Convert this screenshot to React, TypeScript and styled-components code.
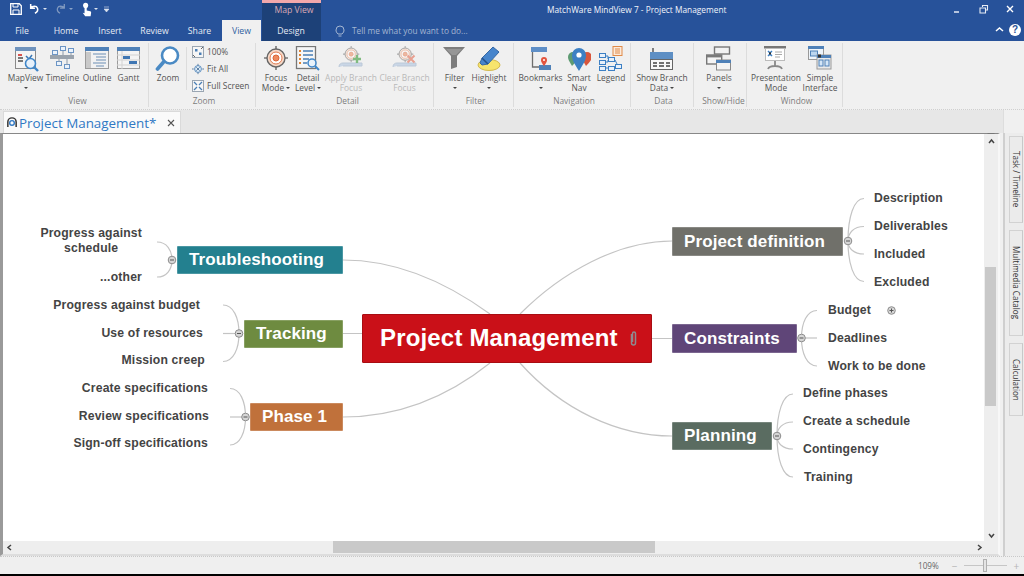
import React from "react";
import styled, { createGlobalStyle } from "styled-components";

const Global = createGlobalStyle`
  html, body { margin: 0; padding: 0; width: 1024px; height: 576px; overflow: hidden; background: #000; }
  #root { width: 1024px; height: 576px; }
  * { box-sizing: border-box; }
`;

const Shell = styled.div`
  width: 1024px; height: 574px; display: flex; flex-direction: column;
  font-family: "Open Sans", "Liberation Sans", sans-serif; background: #f0f0f0; overflow: hidden;
`;
const Header = styled.header`
  height: 41px; background: #27529a; position: relative; color: #fff; display: flex; flex-direction: column; flex: none;
`;
const TitleRow = styled.div`
  height: 20px; display: flex; align-items: center; position: relative; flex: none;
`;
const Qat = styled.div`
  display: flex; align-items: center; padding: 0 0 2px 10px;
`;
const QatSlot = styled.span<{ $w: number }>`
  width: ${p => p.$w}px; display: flex; align-items: center; justify-content: flex-start; height: 18px;
`;
const Caret = styled.i<{ $c?: string; $s?: number }>`
  display: inline-block; width: 0; height: 0;
  border-left: ${p => p.$s ?? 2.5}px solid transparent; border-right: ${p => p.$s ?? 2.5}px solid transparent;
  border-top: ${p => p.$s ?? 2.5}px solid ${p => p.$c ?? "#444"};
`;
const AppTitle = styled.div`
  position: absolute; left: 547px; top: 4px; font-size: 8.33px; line-height: 12px; white-space: nowrap; color: #f2f5fa;
`;
const WinControls = styled.div`
  position: absolute; right: 7px; top: 3px; display: flex; align-items: center; gap: 14px;
`;
const TabRow = styled.nav`
  height: 21px; display: flex; align-items: stretch; position: relative; flex: none;
`;
const MenuTab = styled.div<{ $w: number; $active?: boolean }>`
  width: ${p => p.$w}px; font-size: 8.7px; display: flex; align-items: center; justify-content: center; flex: none;
  background: ${p => (p.$active ? "#f0f0f0" : "transparent")};
  color: ${p => (p.$active ? "#2f5f9f" : "#e6ebf4")};
  position: relative;
`;
const ContextBand = styled.div`
  position: absolute; left: 262px; top: 0; width: 59px; height: 41px; background: #1d4178;
  border-top: 3px solid #f2a8ab; text-align: center; padding-left: 5px;
  color: #d8a9b4; font-size: 8.7px; line-height: 15px;
`;
const TellMe = styled.div`
  display: flex; align-items: center; gap: 7px; margin-left: 14px; color: #a4b6d2; font-size: 8.3px;
`;
const RibbonEnd = styled.div`
  position: absolute; right: 3px; top: 0; height: 19px; display: flex; align-items: center; gap: 5px;
`;
const HelpDot = styled.span`
  width: 12px; height: 12px; border-radius: 50%; background: #fff; color: #27529a; font-size: 10px; font-weight: 700;
  display: flex; align-items: center; justify-content: center; font-family: "Liberation Sans", sans-serif;
`;

const Ribbon = styled.section`
  height: 69px; background: #f0f0f0; display: flex; padding-top: 2px; border-bottom: 1px dotted #cfcfcf; flex: none;
`;
const Group = styled.div<{ $w: number; $pad: number }>`
  width: ${p => p.$w}px; height: 64px; border-right: 1px solid #dcdcdc; padding-left: ${p => p.$pad}px;
  display: flex; flex-direction: column; flex: none;
`;
const GroupBody = styled.div`
  height: 52px; display: flex; align-items: flex-start;
`;
const GroupLabel = styled.div`
  height: 12px; font-size: 8.4px; line-height: 11px; text-align: center; color: #7d7d7d;
`;
const RButton = styled.div<{ $w: number; $off?: boolean }>`
  width: ${p => p.$w}px; display: flex; flex-direction: column; align-items: center; flex: none;
  font-size: 8.4px; line-height: 10px; color: ${p => (p.$off ? "#b9b9b9" : "#555")}; text-align: center; white-space: nowrap;
`;
const IconBox = styled.div`
  height: 30px; padding-top: 3px; display: flex; align-items: flex-start; justify-content: center;
`;
const ArrowLine = styled.div`
  height: 10px; display: flex; align-items: center; justify-content: center; gap: 2px;
`;
const VSep = styled.div`
  width: 1px; height: 43px; background: #dcdcdc; margin: 4px 5px 0 3px; flex: none;
`;
const SmallCol = styled.div`
  display: flex; flex-direction: column; gap: 4px; padding-top: 2px;
`;
const SmallBtn = styled.div`
  display: flex; align-items: center; gap: 3px; height: 13px; font-size: 8.4px; color: #555; white-space: nowrap;
`;

const TabStrip = styled.div`
  height: 23px; background: #e7e7e7; display: flex; align-items: flex-end; padding-left: 3px; position: relative; flex: none;
`;
const DocTab = styled.div`
  width: 178px; height: 22px; background: #fafafa; border: 1px solid #dadada; border-bottom: 0; display: flex; align-items: center;
  padding-left: 2px; gap: 1px; font-size: 13.4px; color: #2f78c4; white-space: nowrap;
  & > svg { flex: none; }
`;
const DocClose = styled.span`
  margin-left: 10px; display: flex; align-items: center;
`;
const StripMenu = styled.div`
  position: absolute; left: 987px; top: 10px;
`;
const StripSide = styled.div`
  position: absolute; left: 1003px; top: 0; width: 21px; height: 23px; background: #f0f0f0; border-left: 1px solid #ddd;
`;

const Main = styled.main`
  flex: 1; display: flex; min-height: 0;
`;
const DocPane = styled.div`
  width: 1000px; border-left: 3px solid #9a9a9a; border-top: 1px solid #888; border-right: 2px solid #f7f7f7; border-bottom: 2px solid #ddd;
  display: grid; grid-template-columns: 1fr 14px; grid-template-rows: 1fr 13px; background: #eee;
`;
const Canvas = styled.div`
  background: #fff; position: relative; overflow: hidden;
`;
const VBar = styled.div`
  background: #eee; position: relative; display: flex; flex-direction: column; align-items: center; justify-content: space-between; padding: 4px 0 2px;
`;
const HBar = styled.div`
  background: #eee; position: relative; display: flex; align-items: center; justify-content: space-between; padding: 0 1px 0 3px; height: 13px;
`;
const Corner = styled.div`background: #eee;`;
const VThumb = styled.div`
  position: absolute; left: 1px; top: 133px; width: 11px; height: 139px; background: #c9c9c9;
`;
const HThumb = styled.div`
  position: absolute; left: 330px; top: 0; width: 322px; height: 12px; background: #c9c9c9;
`;
const SideRail = styled.aside`
  flex: 1; background: #ececec; border-left: 2px solid #cfcfcf; padding: 3px 1px 0 4px; margin-left: 3px; display: flex; flex-direction: column; gap: 7px;
`;
const SideTab = styled.div<{ $h: number }>`
  height: ${p => p.$h}px; background: #ebebeb; border: 1px solid #d2d2d2; border-right: 1px solid #c8c8c8;
  writing-mode: vertical-rl; display: flex; align-items: center; justify-content: center; font-size: 8.1px; color: #333; white-space: nowrap;
`;
const Status = styled.footer`
  height: 18px; flex: none; background: #efefef; display: flex; align-items: center; border-top: 1px dotted #c8c8c8; position: relative;
  padding-left: 918px; font-size: 8.2px; color: #666;
`;
const Zoomer = styled.div`
  display: flex; align-items: center; margin-left: 13px; color: #b5b5b5; font-size: 10px;
`;
const Track = styled.div`
  width: 43px; height: 1px; background: #c6c6c6; margin: 0 7px 0 6px; position: relative;
`;
const Knob = styled.div`
  position: absolute; left: 19px; top: -6px; width: 4px; height: 13px; background: #e4e4e4; border: 1px solid #b0b0b0;
`;

const ORIGIN = { x: 3, y: 134 };
const Links = styled.svg`
  position: absolute; left: 0; top: 0; width: 100%; height: 100%;
`;
const Topic = styled.div<{ $x: number; $y: number; $w: number; $h: number; $bg: string }>`
  position: absolute; left: ${p => p.$x - ORIGIN.x}px; top: ${p => p.$y - ORIGIN.y}px; width: ${p => p.$w}px; height: ${p => p.$h}px;
  background: ${p => p.$bg}; color: #fff; font: 700 17px/1 "Liberation Sans", Arial, sans-serif;
  letter-spacing: 0.12px;
  display: flex; align-items: center; border: 1px solid rgba(255,255,255,.18); border-radius: 1px; white-space: nowrap;
  padding: 0 0 1px 11px;
`;
const Root = styled(Topic)`
  border: 1px solid #a80d12; padding: 0 0 1px 17px; font-size: 24px; letter-spacing: 0.17px;
`;
const Leaf = styled.div<{ $x: number; $y: number; $right?: boolean }>`
  position: absolute; top: ${p => p.$y - ORIGIN.y - 8}px;
  ${p => (p.$right ? `right: ${981 - (p.$x - ORIGIN.x)}px; text-align: right;` : `left: ${p.$x - ORIGIN.x}px;`)}
  font: 700 12.2px/16px "Liberation Sans", Arial, sans-serif; letter-spacing: 0.17px; color: #444; white-space: nowrap;
`;
const Wrapped = styled(Leaf)`
  text-align: center; line-height: 15px;
`;
const Clip = styled.svg`
  position: absolute; left: ${630 - ORIGIN.x}px; top: ${331 - ORIGIN.y}px;
`;

type IcoProps = { children: React.ReactNode; w?: number; h?: number; vb?: string };
const Ico = ({ children, w = 26, h = 26, vb }: IcoProps) => (
  <svg width={w} height={h} viewBox={vb ?? `0 0 ${w} ${h}`} fill="none">{children}</svg>
);

const MapViewIcon = () => (
  <Ico>
    <rect x="2.5" y="1.5" width="20" height="21" fill="#f4f4f4" stroke="#8a8a8a" />
    <rect x="2" y="1" width="21" height="4" fill="#6f93bd" />
    <rect x="5" y="8" width="4" height="2" fill="#d9534f" />
    <path d="M5 12h5M5 15h5" stroke="#777" strokeWidth="2" />
    <path d="M13 10l3 3 3-4" stroke="#3c78b5" strokeWidth="1.5" />
    <circle cx="17.5" cy="17.5" r="5" fill="#e6f0fa" stroke="#3f86c9" strokeWidth="1.6" />
    <path d="M21 21l4 4" stroke="#3f86c9" strokeWidth="2.4" />
  </Ico>
);
const TimelineIcon = () => (
  <Ico>
    <rect x="0" y="9" width="24" height="4" fill="#9aa3ad" />
    <rect x="2.5" y="4.5" width="5" height="4" stroke="#6c95c5" fill="#eaf2fb" />
    <rect x="10.5" y=".5" width="5" height="4" stroke="#6c95c5" fill="#eaf2fb" />
    <rect x="18.5" y="2.5" width="5" height="4" stroke="#6c95c5" fill="#eaf2fb" />
    <rect x="6.5" y="15.5" width="5" height="4" stroke="#6c95c5" fill="#eaf2fb" />
    <rect x="14.5" y="18.5" width="5" height="4" stroke="#6c95c5" fill="#eaf2fb" />
    <path d="M13 5v4M21 7v2M9 13v3M17 13v6" stroke="#8c9aaa" />
  </Ico>
);
const OutlineIcon = () => (
  <Ico>
    <rect x="1.5" y="1.5" width="23" height="21" fill="#f2f2f2" stroke="#9b9b9b" />
    <rect x="1" y="1" width="24" height="4" fill="#4f81b8" />
    <rect x="2" y="6" width="5" height="16" fill="#c9c9c9" />
    <path d="M9 8h13M12 11h10M12 14h10M9 17h13M12 20h8" stroke="#6d8fb5" />
  </Ico>
);
const GanttIcon = () => (
  <Ico>
    <rect x="1.5" y="1.5" width="22" height="21" fill="#f4f4f4" stroke="#9b9b9b" />
    <rect x="1" y="1" width="23" height="4" fill="#4f81b8" />
    <path d="M6 5v18M1 9h23M1 14h23M1 19h23" stroke="#d2d2d2" />
    <rect x="7" y="10" width="7" height="3" fill="#3f76b3" />
    <rect x="13" y="15" width="8" height="3" fill="#3f76b3" />
  </Ico>
);
const ZoomIcon = () => (
  <Ico>
    <circle cx="15" cy="9.5" r="8" fill="#fff" stroke="#4a8ac4" strokeWidth="2.6" />
    <path d="M9 15.5L2.5 23" stroke="#4a8ac4" strokeWidth="3.6" strokeLinecap="round" />
  </Ico>
);
const Small100 = () => (
  <Ico w={12} h={12}>
    <rect x=".5" y=".5" width="11" height="11" fill="#f5f5f5" stroke="#9aa6b2" />
    <rect x="3" y="3" width="2.5" height="2.5" fill="#4a7fb5" /><rect x="7" y="6.5" width="2.5" height="2.5" fill="#4a7fb5" />
    <path d="M1 9l2 2M11 1L9 3" stroke="#666" />
  </Ico>
);
const SmallFit = () => (
  <Ico w={12} h={12} vb="0 0 14 12">
    <circle cx="7" cy="6" r="4" fill="#dcebf8" stroke="#4a7fb5" />
    <path d="M7 0v2M7 10v2M0 6h2M12 6h2M5 4l4 4M9 4L5 8" stroke="#4a6f96" />
  </Ico>
);
const SmallFull = () => (
  <Ico w={12} h={12}>
    <rect x=".5" y=".5" width="11" height="11" fill="#f7f7f7" stroke="#9aa6b2" />
    <path d="M2 2l3 3M10 2L7 5M2 10l3-3M10 10L7 7" stroke="#4a7fb5" strokeWidth="1.3" />
  </Ico>
);
const Target = ({ dim }: { dim?: boolean }) => (
  <g opacity={dim ? 0.55 : 1}>
    <path d="M12 0v24M0 12h24" stroke="#777" strokeWidth="1.6" />
    <circle cx="12" cy="12" r="9" fill="#f6d9c8" stroke="#666" strokeWidth="1.4" />
    <circle cx="12" cy="12" r="6" fill="#fff" stroke="#e07a50" />
    <circle cx="12" cy="12" r="3" fill="#ee8a5e" stroke="#d9663a" />
  </g>
);
const FocusIcon = () => <Ico w={24} h={26}><Target /></Ico>;
const DetailIcon = () => (
  <Ico>
    <rect x="1.5" y=".5" width="19" height="22" fill="#f6f6f6" stroke="#777" strokeWidth="1.3" />
    <path d="M4 5h2M4 9h2M4 13h2M4 17h2" stroke="#e08332" strokeWidth="2" />
    <path d="M8 5h10M8 9h10M8 13h6M8 17h4" stroke="#4a7fb5" strokeWidth="1.3" />
    <circle cx="17" cy="17" r="4" fill="#e8f2fb" stroke="#3f86c9" strokeWidth="1.5" />
    <path d="M20 20l4 4" stroke="#3f86c9" strokeWidth="2" />
  </Ico>
);
const BranchFocus = ({ children }: { children: React.ReactNode }) => (
  <Ico w={26} h={24}>
    <g transform="translate(5,0) scale(.68)"><Target dim /></g>
    <path d="M1 21c0-3 2-4 4-4h19v3H5" fill="#c9d6e6" stroke="#bcc9d8" />
    {children}
  </Ico>
);
const ApplyIcon = () => (
  <BranchFocus><path d="M19 9v8M15 13h8" stroke="#80bb80" strokeWidth="2.4" /></BranchFocus>
);
const ClearIcon = () => (
  <BranchFocus><path d="M15.5 9.5l7 7M22.5 9.5l-7 7" stroke="#e8a090" strokeWidth="2" /></BranchFocus>
);
const FilterIcon = () => (
  <Ico w={24} h={24}>
    <path d="M0 1h22l-8 9v11l-6 2V10z" fill="#7d7d7d" />
    <path d="M3 3h16l-6 6H9z" fill="#969696" />
  </Ico>
);
const HighlightIcon = () => (
  <Ico w={24} h={26}>
    <ellipse cx="12" cy="19" rx="11" ry="5.5" fill="#f7e46d" stroke="#d3b950" />
    <path d="M16 1l6 5-11 12-6 1-2-2 2-5z" fill="#4785cc" stroke="#3668a5" />
    <path d="M5 12l6 6" stroke="#24518a" strokeWidth="1.5" />
  </Ico>
);
const BookmarkIcon = () => (
  <Ico w={22} h={26}>
    <rect x="1" y="1" width="16" height="5" fill="#5f8fc7" />
    <path d="M2.5 6v15h15" stroke="#6d6d6d" strokeWidth="1.3" />
    <rect x="9" y="19" width="12" height="5" fill="#4f81b8" />
    <path d="M14 20c-3-4-3-5-3-6a3 3 0 016 0c0 1 0 2-3 6z" fill="#e2543e" />
    <circle cx="14" cy="14" r="1" fill="#fff" />
  </Ico>
);
const SmartIcon = () => (
  <Ico w={24} h={26}>
    <path d="M5 20C2 15 1 13 1 11a5 5 0 0110 0c0 2-2 5-6 9z" fill="#5e9b73" />
    <path d="M19 20c-3-5-4-7-4-9a5 5 0 0110 0c0 2-2 5-6 9z" fill="#d9573d" />
    <path d="M12 25C7 17 5 14 5 9a7 7 0 0114 0c0 5-2 8-7 16z" fill="#3d80c4" />
    <circle cx="12" cy="9" r="2.6" fill="#fff" />
  </Ico>
);
const LegendIcon = () => (
  <Ico w={24} h={26}>
    <rect x="14" y=".5" width="9" height="9" fill="#fbeadb" stroke="#e08a48" />
    <path d="M16 3h5M16 5h5M16 7h5" stroke="#e08a48" />
    <g fill="#e9f1fa" stroke="#3d80c4">
      <rect x=".5" y="7.5" width="6" height="4" /><rect x="9.5" y="11.5" width="6" height="4" />
      <rect x=".5" y="14.5" width="6" height="4" /><rect x=".5" y="20.5" width="6" height="4" />
      <rect x="16.5" y="18.5" width="6" height="4" /><rect x="9.5" y="20.5" width="6" height="4" />
    </g>
    <path d="M7 10h2v3M7 16h2v-2M7 22h2M16 14l2 4" stroke="#3d80c4" />
  </Ico>
);
const BranchDataIcon = () => (
  <Ico w={24} h={26}>
    <rect x="0" y="6" width="23" height="8" fill="#5e8fc4" />
    <path d="M3 2v4" stroke="#5a5a5a" strokeWidth="1.5" />
    <rect x=".5" y="13.5" width="22" height="10" fill="#f8f8f8" stroke="#666" />
    <path d="M3 17h4M9 17h5M16 17h4M3 20h4M9 20h5M16 20h4" stroke="#444" strokeWidth="1.4" />
  </Ico>
);
const PanelsIcon = () => (
  <Ico>
    <rect x="8.5" y="1" width="15" height="7" fill="#f2f2f2" stroke="#777" strokeWidth="1.4" />
    <rect x=".7" y="9" width="15" height="9" fill="#f4f4f4" stroke="#777" strokeWidth="1.4" />
    <rect x="1" y="9" width="15" height="2.4" fill="#7a7a7a" />
    <rect x="10.5" y="14" width="14" height="10" fill="#f4f4f4" stroke="#888" />
    <rect x="10" y="14" width="15" height="3" fill="#4f81b8" />
  </Ico>
);
const PresentIcon = () => (
  <Ico w={24} h={24}>
    <rect x="0" y="0" width="22" height="2.5" fill="#777" />
    <rect x="1.5" y="2.5" width="19" height="12" fill="#fff" stroke="#bbb" />
    <path d="M4 5l2 2 2-2M4 10l2-2 2 2" stroke="#3d80c4" strokeWidth="1.5" />
    <rect x="5" y="6.4" width="2" height="2" fill="#333" />
    <path d="M11 6h7M11 8.5h7M11 11h5" stroke="#aaa" />
    <path d="M11 15v5M4 23c1-2.5 3-3 7-3s6 .5 7 3" stroke="#888" strokeWidth="1.8" />
  </Ico>
);
const SimpleIcon = () => (
  <Ico w={24} h={26}>
    <rect x=".5" y=".5" width="15" height="13" fill="#eef4fa" stroke="#999" />
    <rect x="0" y="0" width="16" height="3" fill="#4f81b8" />
    <rect x="2.5" y="5" width="7" height="5" fill="#bcd6ef" stroke="#4f81b8" />
    <rect x="9" y="9" width="14" height="14" fill="#eaeaea" stroke="#999" />
    <rect x="9" y="9" width="14" height="3" fill="#4f81b8" />
    <rect x="11" y="14" width="4" height="6" fill="#d4e6f7" stroke="#4f81b8" />
    <rect x="17" y="14" width="4" height="6" fill="#d4e6f7" stroke="#4f81b8" />
    <rect x="10" y="8.5" width="3" height="3" fill="#333" />
  </Ico>
);

type Btn = { lines: string[]; w: number; icon: React.ReactNode; arrow?: "below" | "inline"; off?: boolean };
const RibbonButton = ({ lines, w, icon, arrow, off }: Btn) => (
  <RButton $w={w} $off={off}>
    <IconBox>{icon}</IconBox>
    {lines.map((l, i) => (
      <ArrowLine key={l}>
        {l}
        {arrow === "inline" && i === lines.length - 1 && <Caret />}
      </ArrowLine>
    ))}
    {arrow === "below" && <ArrowLine><Caret /></ArrowLine>}
  </RButton>
);

const groups: { label: string; w: number; pad: number; buttons: Btn[] }[] = [
  { label: "Detail", w: 178, pad: 6, buttons: [
    { lines: ["Focus", "Mode"], w: 28, icon: <FocusIcon />, arrow: "inline" },
    { lines: ["Detail", "Level"], w: 36, icon: <DetailIcon />, arrow: "inline" },
    { lines: ["Apply Branch", "Focus"], w: 50, icon: <ApplyIcon />, off: true },
    { lines: ["Clear Branch", "Focus"], w: 57, icon: <ClearIcon />, off: true },
  ] },
  { label: "Filter", w: 80, pad: 4, buttons: [
    { lines: ["Filter"], w: 33, icon: <FilterIcon />, arrow: "below" },
    { lines: ["Highlight"], w: 36, icon: <HighlightIcon />, arrow: "below" },
  ] },
  { label: "Navigation", w: 117, pad: 4, buttons: [
    { lines: ["Bookmarks"], w: 45, icon: <BookmarkIcon />, arrow: "below" },
    { lines: ["Smart", "Nav"], w: 32, icon: <SmartIcon /> },
    { lines: ["Legend"], w: 32, icon: <LegendIcon /> },
  ] },
  { label: "Data", w: 63, pad: 3, buttons: [
    { lines: ["Show Branch", "Data"], w: 56, icon: <BranchDataIcon />, arrow: "inline" },
  ] },
  { label: "Show/Hide", w: 53, pad: 7, buttons: [
    { lines: ["Panels"], w: 36, icon: <PanelsIcon />, arrow: "below" },
  ] },
  { label: "Window", w: 96, pad: 4, buttons: [
    { lines: ["Presentation", "Mode"], w: 50, icon: <PresentIcon /> },
    { lines: ["Simple", "Interface"], w: 38, icon: <SimpleIcon /> },
  ] },
];

const topics = [
  { t: "Troubleshooting", x: 177, y: 246, w: 166, h: 28, bg: "#23808f" },
  { t: "Tracking", x: 244, y: 320, w: 99, h: 28, bg: "#6e8b40" },
  { t: "Phase 1", x: 250, y: 403, w: 93, h: 28, bg: "#c0713b" },
  { t: "Project definition", x: 672, y: 227, w: 171, h: 29, bg: "#70706a" },
  { t: "Constraints", x: 672, y: 324, w: 125, h: 29, bg: "#5f4578" },
  { t: "Planning", x: 672, y: 422, w: 100, h: 28, bg: "#5a6c61" },
];
const rightLeaves: [string, number, number][] = [
  ["Description", 874, 198], ["Deliverables", 874, 226], ["Included", 874, 253.5], ["Excluded", 874, 281.5],
  ["Budget", 828, 310], ["Deadlines", 828, 338], ["Work to be done", 828, 365.5],
  ["Define phases", 803, 393], ["Create a schedule", 803, 421], ["Contingency", 803, 449], ["Training", 804, 476.5],
];
const leftLeaves: [string, number, number][] = [
  ["...other", 142, 277],
  ["Progress against budget", 200, 304.5], ["Use of resources", 203, 332.5], ["Mission creep", 205, 360],
  ["Create specifications", 208, 388], ["Review specifications", 209, 415.5], ["Sign-off specifications", 208, 443],
];
const forks: { cx: number; cy: number; ends: [number, number][] }[] = [
  { cx: 172, cy: 260, ends: [[157, 242], [157, 277]] },
  { cx: 239, cy: 333.5, ends: [[223, 305], [223, 333.5], [223, 361.5]] },
  { cx: 245.5, cy: 417, ends: [[230, 388.5], [230, 417], [230, 445]] },
  { cx: 848, cy: 241, ends: [[864, 198.5], [864, 226.5], [864, 254], [864, 281.5]] },
  { cx: 801.5, cy: 338, ends: [[817, 310.5], [817, 338], [817, 366]] },
  { cx: 777, cy: 436, ends: [[793, 394], [793, 422], [793, 449], [793, 477]] },
];
const forkPath = (cx: number, cy: number, ex: number, ey: number) =>
  Math.abs(ey - cy) < 1 ? `M${cx} ${cy}L${ex} ${ey}` : `M${cx} ${cy}C${cx} ${cy + (ey - cy) * 0.55} ${cx + (ex - cx) * 0.35} ${ey} ${ex} ${ey}`;

const MindMap = () => (
  <>
    <Links viewBox="3 134 981 407" preserveAspectRatio="none">
      <g stroke="#c4c4c4" strokeWidth="1.2" fill="none">
        <path d="M520 314C562 272 618 241 672 241" />
        <path d="M490 314C450 285 400 260 343 260" />
        <path d="M490 363C450 395 400 417 343 417" />
        <path d="M520 363C562 410 618 436 672 436" />
        <path d="M343 333.5H362M652 338.5H672" />
        {forks.map(f => f.ends.map(([x, y]) => <path key={`${x}-${y}`} d={forkPath(f.cx, f.cy, x, y)} />))}
      </g>
      {forks.map(f => (
        <g key={f.cx}>
          <circle cx={f.cx} cy={f.cy} r="3.8" fill="#d6d6d6" stroke="#8d8d8d" />
          <path d={`M${f.cx - 2} ${f.cy}h4`} stroke="#555" />
        </g>
      ))}
      <circle cx="891.5" cy="310.5" r="3.8" fill="#d6d6d6" stroke="#8d8d8d" />
      <path d="M889.5 310.5h4M891.5 308.5v4" stroke="#555" />
    </Links>
    {topics.map(t => (
      <Topic key={t.t} $x={t.x} $y={t.y} $w={t.w} $h={t.h} $bg={t.bg}>{t.t}</Topic>
    ))}
    <Root $x={362} $y={314} $w={290} $h={49} $bg="#ca1018">Project Management</Root>
    <Clip width="7" height="15" viewBox="0 0 7 15" fill="none">
      <path d="M1.5 3v9a2 2 0 004 0V2.5a1.5 1.5 0 00-3 0V11" stroke="#8f8a90" strokeWidth="1.5" />
    </Clip>
    {rightLeaves.map(([t, x, y]) => <Leaf key={t} $x={x} $y={y}>{t}</Leaf>)}
    {leftLeaves.map(([t, x, y]) => <Leaf key={t} $x={x} $y={y} $right>{t}</Leaf>)}
    <Wrapped $x={142} $y={234} $right>Progress against<br />schedule</Wrapped>
  </>
);

const Chevron = ({ d }: { d: string }) => (
  <svg width="7" height="7" viewBox="0 0 7 7" fill="none"><path d={d} stroke="#444" strokeWidth="1.5" /></svg>
);

export default function App() {
  return (
    <>
      <Global />
      <Shell>
        <Header>
          <TitleRow>
            <Qat>
              <QatSlot $w={19}>
                <svg width="12" height="12" viewBox="0 0 12 12" fill="none">
                  <path d="M.7.7h8.6l2 2v8.6H.7z" stroke="#fff" strokeWidth="1.3" />
                  <path d="M3 1v3h5V1M3 11V7h6v4" stroke="#fff" />
                </svg>
              </QatSlot>
              <QatSlot $w={14}>
                <svg width="11" height="12" viewBox="0 0 13 12" fill="none">
                  <path d="M2 0v5h5M2 5c2-3 7-3 8 0 1 3-1 5-3 6" stroke="#fff" strokeWidth="1.8" />
                </svg>
              </QatSlot>
              <QatSlot $w={12}><Caret $c="#dbe3ef" /></QatSlot>
              <QatSlot $w={14}>
                <svg width="11" height="12" viewBox="0 0 13 12" fill="none">
                  <path d="M11 0v5H6M11 5C9 2 4 2 3 5c-1 3 1 5 3 6" stroke="#7f98bf" strokeWidth="1.5" />
                </svg>
              </QatSlot>
              <QatSlot $w={13}><Caret $c="#8ba3c7" /></QatSlot>
              <QatSlot $w={12}>
                <svg width="10" height="15" viewBox="0 0 11 15" fill="#fff">
                  <circle cx="4" cy="3" r="2.8" /><path d="M2.8 5h2.4v3.5l3.8.8c1 .3 1.2 1 1 2L9.5 15H3.5L.8 11l2 .5z" />
                </svg>
              </QatSlot>
              <QatSlot $w={10}><Caret $c="#dbe3ef" /></QatSlot>
              <QatSlot $w={8}>
                <svg width="6" height="6" viewBox="0 0 6 6"><path d="M0 1h5M0 3h5L2.5 6z" stroke="#dbe3ef" fill="#dbe3ef" strokeWidth=".6" /></svg>
              </QatSlot>
            </Qat>
            <AppTitle>MatchWare MindView 7 - Project Management</AppTitle>
            <WinControls>
              <svg width="13" height="13" viewBox="0 0 13 13"><path d="M4 9h5" stroke="#e6ebf4" strokeWidth="1.5" /></svg>
              <svg width="13" height="13" viewBox="0 0 13 13" fill="none"><path d="M5.5 4V2.5h5V7H9M3 5h5.500v5H3z" stroke="#e6ebf4" strokeWidth="1.1" /></svg>
              <svg width="13" height="13" viewBox="0 0 13 13"><path d="M3 3l6 6M9 3L3 9" stroke="#fff" strokeWidth="1.4" /></svg>
            </WinControls>
          </TitleRow>
          <ContextBand>Map View</ContextBand>
          <TabRow>
            <MenuTab $w={44}>File</MenuTab>
            <MenuTab $w={44}>Home</MenuTab>
            <MenuTab $w={44}>Insert</MenuTab>
            <MenuTab $w={45}>Review</MenuTab>
            <MenuTab $w={45}>Share</MenuTab>
            <MenuTab $w={39} $active>View</MenuTab>
            <MenuTab $w={60}>Design</MenuTab>
            <TellMe>
              <svg width="10" height="12" viewBox="0 0 10 12" fill="none"><path d="M3 9C1.5 7.5 1 6.5 1 5a4 4 0 018 0c0 1.5-.5 2.5-2 4zM3.500 11h3" stroke="#a4b6d2" /></svg>
              Tell me what you want to do...
            </TellMe>
            <RibbonEnd>
              <svg width="9" height="7" viewBox="0 0 9 7" fill="none"><path d="M1 5l3.500-3L8 5" stroke="#fff" strokeWidth="1.5" /></svg>
              <HelpDot>?</HelpDot>
            </RibbonEnd>
          </TabRow>
        </Header>

        <Ribbon>
          <Group $w={149} $pad={7}>
            <GroupBody>
              <RibbonButton lines={["MapView"]} w={37} icon={<MapViewIcon />} arrow="below" />
              <RibbonButton lines={["Timeline"]} w={37} icon={<TimelineIcon />} />
              <RibbonButton lines={["Outline"]} w={32} icon={<OutlineIcon />} />
              <RibbonButton lines={["Gantt"]} w={31} icon={<GanttIcon />} />
            </GroupBody>
            <GroupLabel>View</GroupLabel>
          </Group>
          <Group $w={107} $pad={4}>
            <GroupBody>
              <RibbonButton lines={["Zoom"]} w={30} icon={<ZoomIcon />} />
              <VSep />
              <SmallCol>
                <SmallBtn><Small100 />100%</SmallBtn>
                <SmallBtn><SmallFit />Fit All</SmallBtn>
                <SmallBtn><SmallFull />Full Screen</SmallBtn>
              </SmallCol>
            </GroupBody>
            <GroupLabel>Zoom</GroupLabel>
          </Group>
          {groups.map(g => (
            <Group key={g.label} $w={g.w} $pad={g.pad}>
              <GroupBody>
                {g.buttons.map(b => <RibbonButton key={b.lines.join()} {...b} />)}
              </GroupBody>
              <GroupLabel>{g.label}</GroupLabel>
            </Group>
          ))}
        </Ribbon>

        <TabStrip>
          <DocTab>
            <svg width="12" height="13" viewBox="0 0 13 13" fill="none">
              <path d="M2 11.5V6a4.500 4.500 0 019 0v5.500" stroke="#333" strokeWidth="1.6" />
              <circle cx="6.5" cy="7" r="2.5" stroke="#2f78c4" strokeWidth="1.5" />
            </svg>
            Project Management*
            <DocClose>
              <svg width="8" height="8" viewBox="0 0 8 8"><path d="M1 1l6 6M7 1L1 7" stroke="#555" strokeWidth="1.1" /></svg>
            </DocClose>
          </DocTab>
          <StripMenu><Caret $c="#777" $s={4} /></StripMenu>
          <StripSide />
        </TabStrip>

        <Main>
          <DocPane>
            <Canvas><MindMap /></Canvas>
            <VBar>
              <Chevron d="M1 5l2.500-3L6 5" />
              <VThumb />
              <Chevron d="M1 2l2.500 3L6 2" />
            </VBar>
            <HBar>
              <Chevron d="M5 1L2 3.500 5 6" />
              <HThumb />
              <Chevron d="M2 1l3 2.500L2 6" />
            </HBar>
            <Corner />
          </DocPane>
          <SideRail>
            <SideTab $h={87}>Task / Timeline</SideTab>
            <SideTab $h={106}>Multimedia Catalog</SideTab>
            <SideTab $h={73}>Calculation</SideTab>
          </SideRail>
        </Main>

        <Status>
          109%
          <Zoomer>
            −
            <Track><Knob /></Track>
            +
          </Zoomer>
        </Status>
      </Shell>
    </>
  );
}
